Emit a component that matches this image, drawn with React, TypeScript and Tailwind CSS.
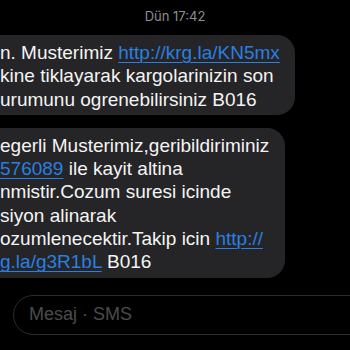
import React from "react";

const Link = ({ children }: { children: React.ReactNode }) => (
  <span className="text-[#2a7fe0] underline decoration-1 underline-offset-[3px]">{children}</span>
);

export default function App() {
  return (
    <div
      className="w-[350px] h-[350px] bg-black overflow-hidden flex flex-col"
      style={{ fontFamily: "'Liberation Sans', Arial, sans-serif" }}
    >
      <div
        className="h-[35px] pt-[8px] text-center text-[13px] text-[#8e8e93] leading-[16px]"
        style={{ fontFamily: "Inter, sans-serif" }}
      >
        Dün 17:42
      </div>
      <div className="flex flex-col gap-[13px] text-[19px] leading-[23.3px] text-[#f4f4f4]">
        <div className="-ml-[20px] w-[315px] rounded-[18px] bg-[#252527] pl-[20px] pt-[6px] pb-[4px] whitespace-nowrap">
          <div>n. Musterimiz <Link>http://krg.la/KN5mx</Link></div>
          <div>kine tiklayarak kargolarinizin son</div>
          <div>urumunu ogrenebilirsiniz B016</div>
        </div>
        <div className="-ml-[20px] w-[305px] rounded-[18px] bg-[#252527] pl-[20px] pt-[6px] pb-[4px] whitespace-nowrap">
          <div>egerli Musterimiz,geribildiriminiz</div>
          <div><Link>576089</Link> ile kayit altina</div>
          <div>nmistir.Cozum suresi icinde</div>
          <div>siyon alinarak</div>
          <div>ozumlenecektir.Takip icin <Link>http://</Link></div>
          <div><Link>g.la/g3R1bL</Link> B016</div>
        </div>
      </div>
      <div className="mt-[17px] ml-[13px] -mr-[40px] h-[40px] rounded-full border border-[#2c2c2e] flex items-center pl-[15px] text-[18px] text-[#4b4b4e]">
        Mesaj · SMS
      </div>
    </div>
  );
}
